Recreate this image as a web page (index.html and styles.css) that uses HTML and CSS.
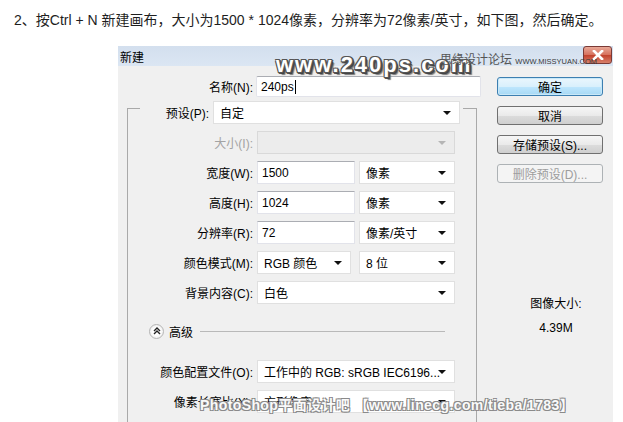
FILE: index.html
```html
<!DOCTYPE html>
<html lang="zh-CN">
<head>
    <meta charset="UTF-8">
    <title>新建</title>
    <link rel="stylesheet" href="styles.css">
</head>
<body>
    <p class="intro">2、按Ctrl + N 新建画布，大小为1500 * 1024像素，分辨率为72像素/英寸，如下图，然后确定。</p>

    <div class="dialog">
        <div class="titlebar">
            <span class="title">新建</span>
            <span class="close"><svg width="12" height="10" viewBox="0 0 12 10"><path d="M2 1 L10 9 M10 1 L2 9" stroke="#fff" stroke-width="2.6" stroke-linecap="square"/></svg></span>
        </div>

        <div class="dialog-body">
            <div class="form-side">
                <div class="row name-row">
                    <label>名称(N):</label>
                    <div class="field input name-input">240ps<span class="caret"></span></div>
                </div>

                <div class="group">
                    <div class="row preset-row">
                        <label>预设(P):</label>
                        <div class="field select preset-select">自定</div>
                    </div>
                    <div class="row">
                        <label class="disabled">大小(I):</label>
                        <div class="field select disabled-select full"></div>
                    </div>
                    <div class="row">
                        <label>宽度(W):</label>
                        <div class="field input half">1500</div>
                        <div class="field select unit">像素</div>
                    </div>
                    <div class="row">
                        <label>高度(H):</label>
                        <div class="field input half">1024</div>
                        <div class="field select unit">像素</div>
                    </div>
                    <div class="row">
                        <label>分辨率(R):</label>
                        <div class="field input half">72</div>
                        <div class="field select unit">像素/英寸</div>
                    </div>
                    <div class="row">
                        <label>颜色模式(M):</label>
                        <div class="field select mode">RGB 颜色</div>
                        <div class="field select unit">8 位</div>
                    </div>
                    <div class="row">
                        <label>背景内容(C):</label>
                        <div class="field select full">白色</div>
                    </div>

                    <div class="advanced">
                        <span class="toggle"><svg width="8" height="8" viewBox="0 0 8 8"><path d="M1 4 L4 1 L7 4 M1 7 L4 4 L7 7" fill="none" stroke="#222" stroke-width="1.4"/></svg></span>
                        <span class="adv-label">高级</span>
                        <span class="adv-line"></span>
                    </div>

                    <div class="row profile-row">
                        <label>颜色配置文件(O):</label>
                        <div class="field select full">工作中的 RGB: sRGB IEC6196...</div>
                    </div>
                    <div class="row">
                        <label>像素长宽比(X):</label>
                        <div class="field select full">方形像素</div>
                    </div>
                </div>
            </div>

            <div class="button-side">
                <button class="btn default">确定</button>
                <button class="btn">取消</button>
                <button class="btn">存储预设(S)...</button>
                <button class="btn" disabled>删除预设(D)...</button>
                <div class="size-info">
                    <div>图像大小:</div>
                    <div class="size-value">4.39M</div>
                </div>
            </div>
        </div>

        <div class="mark mark-240">www.240ps.com</div>
        <div class="mark mark-missyuan">思缘设计论坛 <span>WWW.MISSYUAN.COM</span></div>
        <div class="mark mark-linecg">PhotoShop平面设计吧 【www.linecg.com/tieba/1783】</div>
    </div>
</body>
</html>
```

FILE: styles.css
```css
body {
    margin: 0;
    background-color: #fff;
    font-family: "Liberation Sans", "Noto Sans CJK SC", sans-serif;
    color: #000;
    overflow: hidden;
}
.intro {
    margin: 0;
    padding: 12px 0 0 14px;
    font-size: 14px;
    line-height: 16px;
    color: #1e1e1e;
}
.dialog {
    position: relative;
    margin: 18px 0 0 118px;
    width: 495px;
    background-color: #f0f0f0;
    font-size: 12px;
}
.titlebar {
    height: 20px;
    display: flex;
    justify-content: space-between;
    align-items: center;
    background: linear-gradient(#d3dfee, #dbe6f3);
}
.title {
    padding-left: 2px;
    font-size: 12px;
}
.close {
    width: 29px;
    height: 18px;
    margin: -3px 1px 0 0;
    display: flex;
    align-items: center;
    justify-content: center;
    box-sizing: border-box;
    border: 1px solid #7a3a36;
    border-radius: 3px;
    background: linear-gradient(#e9a897, #d6705c 50%, #c2412c 51%, #d8806a);
}
.dialog-body {
    display: flex;
    height: 356px;
}
.form-side {
    width: 379px;
}
.row {
    display: flex;
    align-items: center;
    gap: 4px;
    margin-top: 7px;
    height: 23px;
}
.row label {
    width: 125px;
    text-align: right;
    white-space: nowrap;
}
.row label.disabled {
    color: #a3a3a3;
}
.name-row {
    margin-top: 10px;
    height: 21px;
    gap: 3px;
}
.name-row label {
    width: 135px;
}
.field {
    position: relative;
    box-sizing: border-box;
    height: 100%;
    display: flex;
    align-items: center;
    padding-left: 4px;
    background-color: #fff;
    border: 1px solid #e2e3ea;
    border-top-color: #abadb3;
    font-size: 12px;
    white-space: nowrap;
    overflow: hidden;
}
.name-input {
    width: 225px;
    border-radius: 2px;
}
.caret {
    display: inline-block;
    width: 1px;
    height: 14px;
    margin-left: 1px;
    background-color: #000;
}
.select {
    padding-left: 6px;
    border-color: #e0e0e0;
}
.select::after {
    content: "";
    position: absolute;
    right: 8px;
    top: 9px;
    border-left: 4px solid transparent;
    border-right: 4px solid transparent;
    border-top: 4px solid #111;
}
.half {
    width: 98px;
}
.unit {
    width: 96px;
}
.mode {
    width: 94px;
    margin-right: 4px;
}
.full {
    width: 198px;
}
.disabled-select {
    background-color: #ececec;
    border-color: #d9d9d9;
}
.disabled-select::after {
    border-top-color: #b5b5b5;
}
.group {
    margin: 11px 0 0 9px;
    width: 350px;
    height: 320px;
    box-sizing: border-box;
    border: 1px solid #a9a9a9;
}
.preset-row {
    margin: -8px 0 0 12px;
    padding-right: 3px;
    width: fit-content;
    background-color: #f0f0f0;
}
.preset-row label {
    width: 69px;
}
.preset-select {
    width: 247px;
}
.advanced {
    display: flex;
    align-items: center;
    height: 16px;
    margin-top: 19px;
    padding-left: 21px;
}
.toggle {
    width: 13px;
    height: 13px;
    display: flex;
    align-items: center;
    justify-content: center;
    border: 1px solid #b5b5b5;
    border-radius: 50%;
    background: radial-gradient(#ffffff 40%, #e2e2e2);
}
.adv-label {
    margin-left: 5px;
}
.adv-line {
    width: 245px;
    margin-left: 7px;
    border-top: 1px solid #b9b9b9;
}
.profile-row {
    margin-top: 21px;
}
.button-side {
    width: 106px;
    display: flex;
    flex-direction: column;
    gap: 10px;
    padding-top: 11px;
}
.btn {
    height: 19px;
    padding: 0;
    font-family: inherit;
    font-size: 12px;
    color: #000;
    border: 1px solid #707070;
    border-radius: 3px;
    background: linear-gradient(#f6f6f6, #eaeaea 50%, #dcdcdc 51%, #cfcfcf);
}
.btn.default {
    border-color: #3c7fb1;
    background: linear-gradient(#eaf6fd, #d9f0fc 50%, #bee6fd 51%, #a7d9f5);
    box-shadow: inset 0 0 0 1px #c8e8f8;
}
.btn:disabled {
    color: #9d9d9d;
    border-color: #adb2b5;
    background: #f4f4f4;
}
.size-info {
    margin-top: 104px;
    padding-left: 12px;
    text-align: center;
    line-height: 14px;
}
.size-value {
    margin-top: 10px;
}
.mark {
    position: absolute;
    z-index: 2;
    white-space: nowrap;
    font-weight: bold;
    color: #fff;
}
.mark-240 {
    left: 158px;
    top: 6px;
    font-size: 22px;
    letter-spacing: 2px;
    text-shadow: 1px 1px 0 #555, -1px -1px 0 #555, 1px -1px 0 #555, -1px 1px 0 #555,
                 2px 2px 0 #444, 0 2px 0 #555, 2px 0 0 #555, 3px 3px 1px #777;
}
.mark-missyuan {
    left: 322px;
    top: 4px;
    font-weight: normal;
    font-size: 12px;
    color: #555;
}
.mark-missyuan span {
    font-size: 7.5px;
    color: #3a3a3a;
}
.mark-linecg {
    left: 82px;
    top: 348px;
    font-size: 14px;
    letter-spacing: 0.4px;
    color: #fafafa;
    text-shadow: 1px 1px 0 #8a8a8a, -1px -1px 0 #8a8a8a, 1px -1px 0 #8a8a8a, -1px 1px 0 #8a8a8a;
}
```
